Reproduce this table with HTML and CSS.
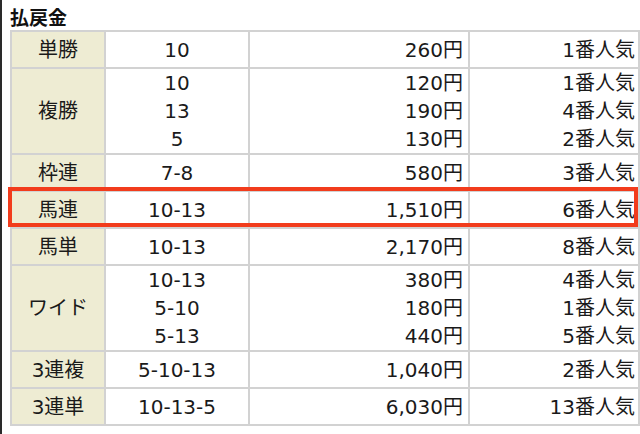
FILE: index.html
```html
<!DOCTYPE html>
<html lang="ja">
<head>
<meta charset="utf-8">
<link rel="stylesheet" href="styles.css">
</head>
<body>
<div class="page">
  <h2 class="title">払戻金</h2>
  <div class="wrap">
    <table class="pay">
      <colgroup><col class="w1"><col class="w2"><col class="w3"><col class="w4"></colgroup>
      <tr class="one"><th>単勝</th><td class="c">10</td><td class="r">260円</td><td class="p">1番人気</td></tr>
      <tr class="three"><th>複勝</th><td class="c">10<br>13<br>5</td><td class="r">120円<br>190円<br>130円</td><td class="p">1番人気<br>4番人気<br>2番人気</td></tr>
      <tr class="one"><th>枠連</th><td class="c">7-8</td><td class="r">580円</td><td class="p">3番人気</td></tr>
      <tr class="one"><th>馬連</th><td class="c">10-13</td><td class="r">1,510円</td><td class="p">6番人気</td></tr>
      <tr class="one"><th>馬単</th><td class="c">10-13</td><td class="r">2,170円</td><td class="p">8番人気</td></tr>
      <tr class="three"><th>ワイド</th><td class="c">10-13<br>5-10<br>5-13</td><td class="r">380円<br>180円<br>440円</td><td class="p">4番人気<br>1番人気<br>5番人気</td></tr>
      <tr class="one"><th>3連複</th><td class="c">5-10-13</td><td class="r">1,040円</td><td class="p">2番人気</td></tr>
      <tr class="one"><th>3連単</th><td class="c">10-13-5</td><td class="r">6,030円</td><td class="p">13番人気</td></tr>
    </table>
    <div class="highlight"></div>
  </div>
  <p class="note">※勝馬投票に基づき払い戻しを行った場合、その払戻金は「<span class="link">払戻金</span>」とします。</p>
</div>
</body>
</html>
```

FILE: styles.css
```css
html, body {
  margin: 0;
  padding: 0;
  background: #ffffff;
}
body {
  font-family: "DejaVu Sans", "Noto Sans CJK JP", sans-serif;
  color: #1a1a1a;
  overflow: hidden;
  height: 434px;
}
.page {
  border-left: 2px solid #2a2a2a;
  height: 434px;
  padding-left: 8px;
  box-sizing: border-box;
  overflow: hidden;
}
.title {
  margin: 0;
  padding-top: 4px;
  height: 26px;
  font-family: "Noto Sans CJK JP", sans-serif;
  font-size: 19px;
  line-height: 26px;
  font-weight: bold;
  color: #111;
}
.wrap {
  position: relative;
  width: 628px;
}
.pay {
  border-collapse: collapse;
  width: 628px;
  table-layout: fixed;
  font-size: 20px;
  line-height: 28px;
}
.w1 { width: 94px; }
.w2 { width: 144px; }
.w3 { width: 220px; }
.w4 { width: 170px; }
.pay th, .pay td {
  border: 2px solid #d2d2d2;
  padding: 0;
  font-weight: normal;
  vertical-align: middle;
}
.pay th {
  background: #eeecd3;
  text-align: center;
}
.pay td.c { text-align: center; }
.pay td.r { text-align: right; padding-right: 5px; }
.pay td.p { text-align: right; padding-right: 3px; }
.pay tr.one th, .pay tr.one td { height: 35px; }
.pay tr.three th, .pay tr.three td { height: 84px; }
.highlight {
  position: absolute;
  left: -2px;
  top: 157px;
  width: 622px;
  height: 32px;
  border: 4px solid #f23c1c;
}
.note {
  margin: 0;
  padding-left: 15px;
  padding-top: 6px;
  font-family: "Noto Sans CJK JP", sans-serif;
  font-size: 15px;
  line-height: 20px;
  color: #444;
  white-space: nowrap;
}
.link { color: #2020e0; }
```
